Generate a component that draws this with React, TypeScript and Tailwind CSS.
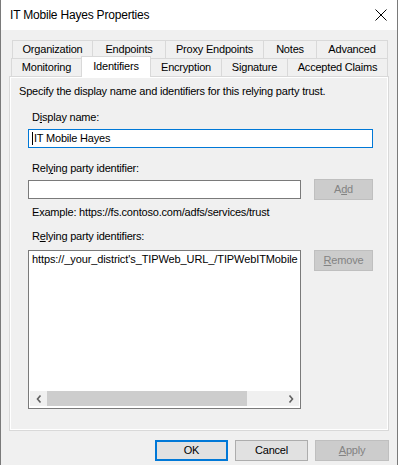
import React from "react";

const font = { fontFamily: '"Liberation Sans", Arial, sans-serif' };

const Tab = ({ label, w, selected }: { label: string; w: number; selected?: boolean }) => {
  if (selected) {
    return (
      <div
        className="relative z-10 -ml-px -mt-[2px] h-[21px] border border-b-0 border-[#d9d9d9] bg-white flex items-start justify-center pt-[2px] text-black"
        style={{ width: w }}
      >
        {label}
      </div>
    );
  }
  return (
    <div
      className="-ml-px h-[19px] border border-[#d9d9d9] bg-[#f0f0f0] flex items-center justify-center text-black"
      style={{ width: w }}
    >
      {label}
    </div>
  );
};

const Btn = ({
  children,
  w,
  variant,
}: {
  children: React.ReactNode;
  w: number;
  variant: "default" | "normal" | "disabled";
}) => {
  const cls =
    variant === "default"
      ? "border-2 border-[#0078d7] bg-[#e1e1e1] text-black"
      : variant === "normal"
      ? "border border-[#adadad] bg-[#e1e1e1] text-black"
      : "border border-[#bfbfbf] bg-[#cccccc] text-[#838383]";
  return (
    <div className={`h-[21px] flex items-center justify-center ${cls}`} style={{ width: w }}>
      {children}
    </div>
  );
};

export default function App() {
  return (
    <div
      className="w-[398px] h-[465px] bg-[#f0f0f0] border-x border-[#7a7a7a] flex flex-col overflow-hidden text-[11px] tracking-[-0.2px] leading-[15px]"
      style={font}
    >
      {/* title bar */}
      <div className="h-[30px] bg-white flex items-center justify-between pl-[9px] pr-[10px] shrink-0">
        <span className="text-[12px] tracking-[-0.2px] text-black">IT Mobile Hayes Properties</span>
        <svg width="12" height="12" viewBox="0 0 12 12">
          <path d="M0.5 0.5 L11.5 11.5 M11.5 0.5 L0.5 11.5" stroke="#000" strokeWidth="1" fill="none" />
        </svg>
      </div>

      {/* tabs */}
      <div className="mt-[10px] flex flex-col">
        <div className="flex pl-[12px] h-[18px]">
          <Tab label="Organization" w={81} />
          <Tab label="Endpoints" w={74} />
          <Tab label="Proxy Endpoints" w={99} />
          <Tab label="Notes" w={54} />
          <Tab label="Advanced" w={72} />
        </div>
        <div className="flex pl-[11px] h-[18px]">
          <Tab label="Monitoring" w={71} />
          <Tab label="Identifiers" w={70} selected />
          <Tab label="Encryption" w={72} />
          <Tab label="Signature" w={67} />
          <Tab label="Accepted Claims" w={101} />
        </div>
      </div>

      {/* panel */}
      <div className="ml-[8px] w-[380px] h-[355px] border border-[#d9d9d9] bg-[#f0f0f0] shadow-[inset_0_0_0_1px_#ffffff] text-black">
        <div className="pl-[9px] pt-[7px]">
          Specify the display name and identifiers for this relying party trust.
        </div>

        <div className="pl-[22px] mt-[11px]">
          D<span className="underline">i</span>splay name:
        </div>
        <div className="ml-[18px] mt-[4px] w-[345px] h-[19px] border border-[#0078d7] bg-white flex items-center pl-[3px]">
          <span className="w-px h-[13px] bg-black mr-[1px]" />
          IT Mobile Hayes
        </div>

        <div className="pl-[22px] mt-[13px]">
          Rel<span className="underline">y</span>ing party identifier:
        </div>
        <div className="ml-[18px] mt-[3px] flex items-start">
          <div className="w-[273px] h-[19px] border border-[#7a7a7a] bg-white mt-[1px]" />
          <div className="ml-[13px]">
            <Btn w={59} variant="disabled">
              <span>
                A<span className="underline">d</span>d
              </span>
            </Btn>
          </div>
        </div>

        <div className="pl-[22px] mt-[5px]">
          Example: https://fs.contoso.com/adfs/services/trust
        </div>

        <div className="pl-[22px] mt-[9px]">
          R<span className="underline">e</span>lying party identifiers:
        </div>
        <div className="ml-[18px] mt-[6px] flex items-start">
          <div className="w-[273px] h-[159px] border border-[#7a7a7a] bg-white flex flex-col overflow-hidden">
            <div className="flex-1 pl-[3px] pt-[1px] whitespace-nowrap overflow-hidden tracking-[-0.1px]">
              https://_your_district's_TIPWeb_URL_/TIPWebITMobile
            </div>
            <div className="h-[15px] mx-px mb-[2px] bg-[#f0f0f0] flex items-center">
              <div className="w-[17px] h-full flex items-center justify-center">
                <svg width="6" height="8" viewBox="0 0 6 8">
                  <path d="M4.5 0.5 L1.5 4 L4.5 7.5" stroke="#606060" strokeWidth="1.6" fill="none" />
                </svg>
              </div>
              <div className="w-[200px] h-full bg-[#cdcdcd]" />
              <div className="flex-1 h-full flex items-center justify-end pr-[5px]">
                <svg width="6" height="8" viewBox="0 0 6 8">
                  <path d="M1.5 0.5 L4.5 4 L1.5 7.5" stroke="#606060" strokeWidth="1.6" fill="none" />
                </svg>
              </div>
            </div>
          </div>
          <div className="ml-[13px]">
            <Btn w={59} variant="disabled">
              <span>
                <span className="underline">R</span>emove
              </span>
            </Btn>
          </div>
        </div>
      </div>

      {/* bottom buttons */}
      <div className="mt-[9px] flex justify-end gap-[7px] pr-[8px]">
        <Btn w={73} variant="default">OK</Btn>
        <Btn w={73} variant="normal">Cancel</Btn>
        <Btn w={74} variant="disabled">
          <span>
            <span className="underline">A</span>pply
          </span>
        </Btn>
      </div>
    </div>
  );
}
